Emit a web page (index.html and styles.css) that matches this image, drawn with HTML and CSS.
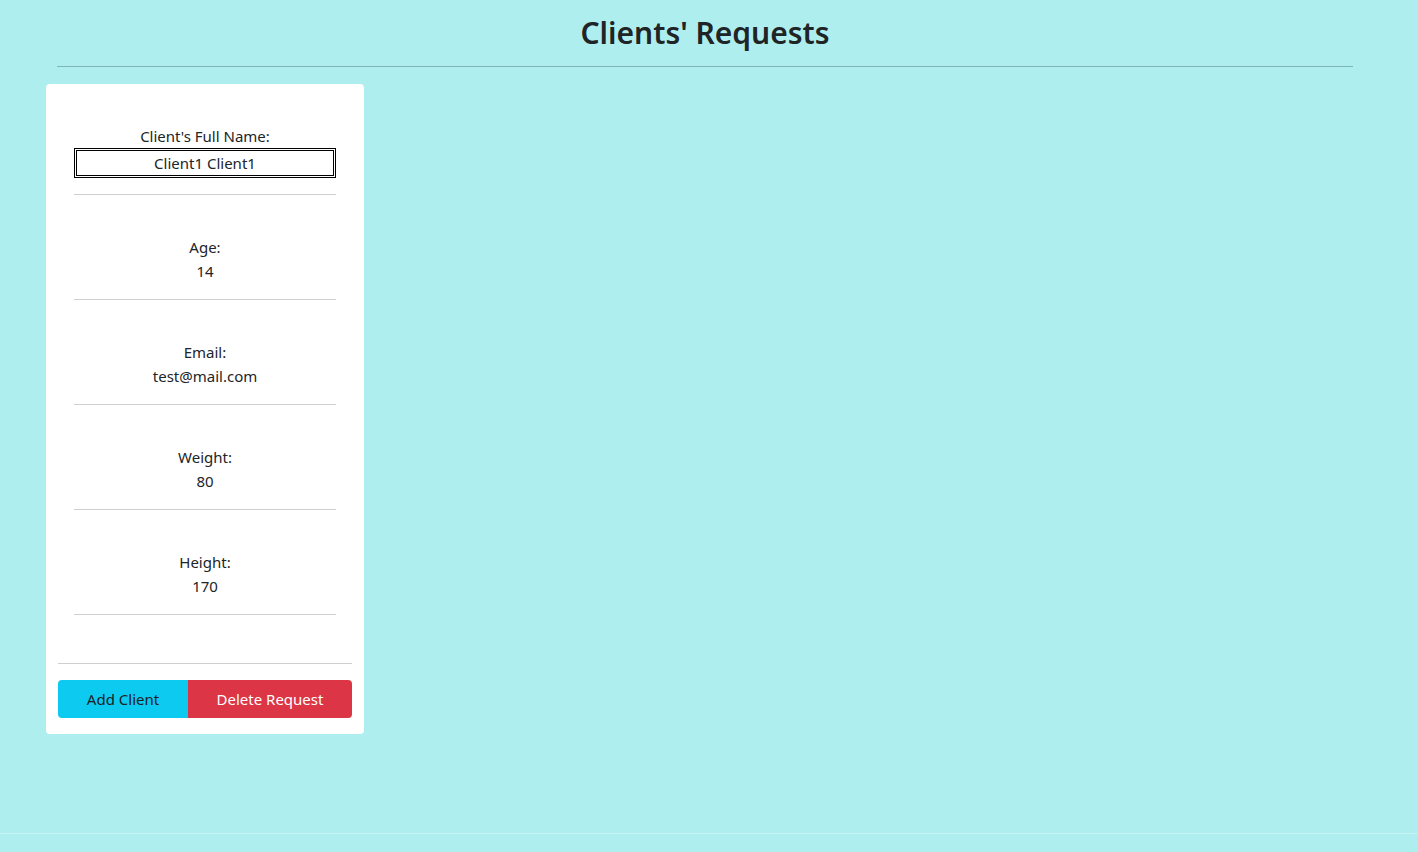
FILE: index.html
```html
<!DOCTYPE html>
<html lang="en">
<head>
<meta charset="utf-8">
<title>Clients' Requests</title>
<link rel="stylesheet" href="styles.css">
</head>
<body>
<div class="page">
  <header class="header">
    <h1 class="title">Clients' Requests</h1>
    <hr class="title-rule">
  </header>
  <main class="cards">
    <div class="card">
      <div class="card-body">
        <div class="field">
          <div class="label">Client's Full Name:</div>
          <input class="name-input" type="text" value="Client1 Client1">
        </div>
        <hr class="rule">
        <div class="field">
          <div class="label">Age:</div>
          <div class="value">14</div>
        </div>
        <hr class="rule">
        <div class="field">
          <div class="label">Email:</div>
          <div class="value">test@mail.com</div>
        </div>
        <hr class="rule">
        <div class="field">
          <div class="label">Weight:</div>
          <div class="value">80</div>
        </div>
        <hr class="rule">
        <div class="field">
          <div class="label">Height:</div>
          <div class="value">170</div>
        </div>
        <hr class="rule last">
      </div>
      <div class="card-footer">
        <hr class="rule footer-rule">
        <div class="btn-group">
          <button class="btn btn-info" type="button">Add Client</button>
          <button class="btn btn-danger" type="button">Delete Request</button>
        </div>
      </div>
    </div>
  </main>
  <footer class="footer"></footer>
</div>
</body>
</html>
```
FILE: styles.css
```css
* { box-sizing: border-box; }
html, body { margin: 0; padding: 0; }
body {
  background: #afeeee;
  color: #212529;
  font-family: "Noto Sans", "Open Sans", sans-serif;
  font-size: 15px;
  line-height: 24px;
}
.page {
  min-height: 852px;
  display: flex;
  flex-direction: column;
}
.header {
  padding: 0 65px 0 57px;
}
.title {
  margin: 0;
  padding-top: 13px;
  text-align: center;
  font-size: 30px;
  line-height: 40px;
  font-weight: 600;
  color: #1f2427;
}
.title-rule {
  margin: 13px 0 0 0;
  border: 0;
  border-top: 1px solid #7fb5b6;
  height: 0;
}
.cards {
  padding: 17px 0 0 46px;
  flex: 1;
}
.card {
  width: 318px;
  background: #fff;
  border-radius: 4px;
}
.card-body {
  padding: 16px 28px 16px;
  text-align: center;
}
.field { padding-top: 24px; }
.label, .value { line-height: 24px; }
.name-input {
  display: block;
  width: 100%;
  height: 30px;
  border: 3px double #000;
  text-align: center;
  font: inherit;
  color: #212529;
  padding: 0;
  background: #fff;
}
.rule {
  margin: 16px 0;
  border: 0;
  border-top: 1px solid #cfcfcf;
  height: 0;
}
.rule.last { margin-bottom: 0; }
.card-footer {
  padding: 32px 12px 16px;
}
.footer-rule { margin: 0 0 16px 0; }
.btn-group {
  display: flex;
}
.btn {
  font: inherit;
  height: 38px;
  border: 0;
  padding: 0;
  line-height: 38px;
}
.btn-info {
  background: #0dcaf0;
  color: #1d2125;
  border-radius: 4px 0 0 4px;
  width: 130px;
}
.btn-danger {
  background: #dc3545;
  color: #fff;
  border-radius: 0 4px 4px 0;
  flex: 1;
}
.footer {
  height: 19px;
  border-top: 1px solid #c6f2f2;
}
```
